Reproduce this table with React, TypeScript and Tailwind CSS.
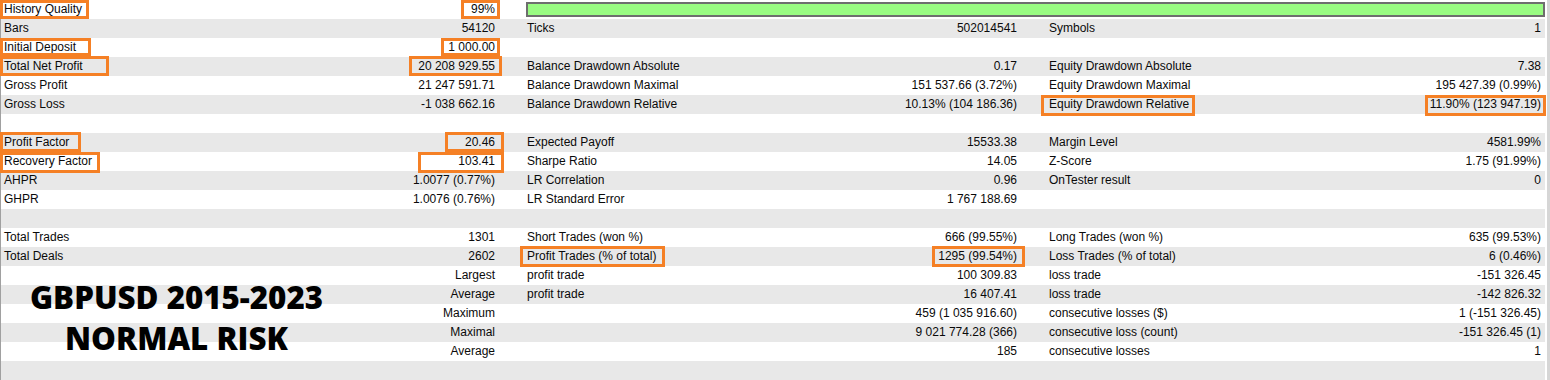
type Cell = [string, string];
type Row = [Cell, Cell, Cell] | null;

const rows: Row[] = [
  null, // history quality row, drawn separately
  [["Bars", "54120"], ["Ticks", "502014541"], ["Symbols", "1"]],
  [["Initial Deposit", "1 000.00"], ["", ""], ["", ""]],
  [["Total Net Profit", "20 208 929.55"], ["Balance Drawdown Absolute", "0.17"], ["Equity Drawdown Absolute", "7.38"]],
  [["Gross Profit", "21 247 591.71"], ["Balance Drawdown Maximal", "151 537.66 (3.72%)"], ["Equity Drawdown Maximal", "195 427.39 (0.99%)"]],
  [["Gross Loss", "-1 038 662.16"], ["Balance Drawdown Relative", "10.13% (104 186.36)"], ["Equity Drawdown Relative", "11.90% (123 947.19)"]],
  [["", ""], ["", ""], ["", ""]],
  [["Profit Factor", "20.46"], ["Expected Payoff", "15533.38"], ["Margin Level", "4581.99%"]],
  [["Recovery Factor", "103.41"], ["Sharpe Ratio", "14.05"], ["Z-Score", "1.75 (91.99%)"]],
  [["AHPR", "1.0077 (0.77%)"], ["LR Correlation", "0.96"], ["OnTester result", "0"]],
  [["GHPR", "1.0076 (0.76%)"], ["LR Standard Error", "1 767 188.69"], ["", ""]],
  [["", ""], ["", ""], ["", ""]],
  [["Total Trades", "1301"], ["Short Trades (won %)", "666 (99.55%)"], ["Long Trades (won %)", "635 (99.53%)"]],
  [["Total Deals", "2602"], ["Profit Trades (% of total)", "1295 (99.54%)"], ["Loss Trades (% of total)", "6 (0.46%)"]],
  [["", "Largest"], ["profit trade", "100 309.83"], ["loss trade", "-151 326.45"]],
  [["", "Average"], ["profit trade", "16 407.41"], ["loss trade", "-142 826.32"]],
  [["", "Maximum"], ["", "459 (1 035 916.60)"], ["consecutive losses ($)", "1 (-151 326.45)"]],
  [["", "Maximal"], ["", "9 021 774.28 (366)"], ["consecutive loss (count)", "-151 326.45 (1)"]],
  [["", "Average"], ["", "185"], ["consecutive losses", "1"]],
  [["", ""], ["", ""], ["", ""]],
];

// orange highlight boxes: left, top, width, height
const marks: [number, number, number, number][] = [
  [0, 0, 89, 19],
  [461, 0, 39, 19],
  [0, 38, 91, 18],
  [441, 38, 59, 18],
  [0, 56, 109, 20],
  [409, 56, 93, 20],
  [1041, 95, 154, 21],
  [1425, 95, 121, 21],
  [0, 132, 81, 20],
  [445, 132, 59, 20],
  [0, 152, 100, 21],
  [418, 152, 86, 21],
  [520, 246, 145, 21],
  [932, 246, 93, 21],
];

export default function App() {
  return (
    <div className="relative flex w-[1550px] h-[380px] bg-white overflow-hidden font-['Liberation_Sans',Arial,sans-serif] text-[12px] text-[#0a0a0a]">
      <div className="w-[1545px] border-l border-[#a0a0a0]">
        {rows.map((row, i) => (
          <div
            key={i}
            className={`grid grid-cols-[525px_522px_1fr] h-[19px] leading-[19px] ${i % 2 === 1 ? "bg-[#e8e8e8]" : "bg-white"}`}
          >
            {row === null ? (
              <>
                <div className="flex justify-between pl-[3px] pr-[31px]">
                  <span>History Quality</span>
                  <span>99%</span>
                </div>
                <div className="col-span-2 flex items-start pt-[2px]">
                  <div className="h-[15px] w-full border-2 border-[#6e6e6e] bg-[#99fb82]" />
                </div>
              </>
            ) : (
              <>
                <div className="flex justify-between pl-[3px] pr-[31px]">
                  <span>{row[0][0]}</span>
                  <span>{row[0][1]}</span>
                </div>
                <div className="flex justify-between pl-[1px] pr-[31px]">
                  <span>{row[1][0]}</span>
                  <span>{row[1][1]}</span>
                </div>
                <div className="flex justify-between pl-[1px] pr-[4px]">
                  <span>{row[2][0]}</span>
                  <span>{row[2][1]}</span>
                </div>
              </>
            )}
          </div>
        ))}
      </div>
      <div className="w-[2px] bg-white" />
      <div className="w-[3px] bg-[#d6d6d6]" />

      {/* annotation overlays */}
      {marks.map(([l, t, w, h], i) => (
        <div
          key={i}
          className="absolute border-[3px] border-[#f58025]"
          style={{ left: l, top: t, width: w, height: h }}
        />
      ))}

      <div className="absolute left-0 top-[277px] w-[353px] text-center font-['Open_Sans',sans-serif] font-extrabold text-[31.25px] leading-[41px] text-black">
        <div>GBPUSD 2015-2023</div>
        <div>NORMAL RISK</div>
      </div>
    </div>
  );
}
